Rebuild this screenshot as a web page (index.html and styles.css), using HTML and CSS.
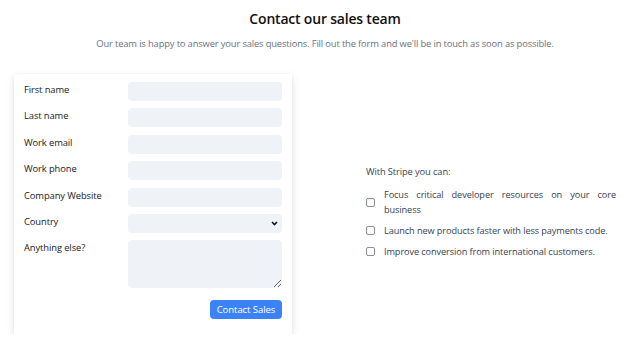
FILE: index.html
```html
<!DOCTYPE html>
<html>
<head>
<meta charset="utf-8">
<link rel="stylesheet" href="styles.css">
</head>
<body>
<header class="head">
  <h1 class="title">Contact our sales team</h1>
  <p class="sub">Our team is happy to answer your sales questions. Fill out the form and we'll be in touch as soon as possible.</p>
</header>
<main class="main">
  <form class="card">
    <div class="row"><label class="lbl">First name</label><input class="field" type="text"></div>
    <div class="row"><label class="lbl">Last name</label><input class="field" type="text"></div>
    <div class="row"><label class="lbl">Work email</label><input class="field" type="email"></div>
    <div class="row"><label class="lbl">Work phone</label><input class="field" type="tel"></div>
    <div class="row"><label class="lbl">Company Website</label><input class="field" type="text"></div>
    <div class="row"><label class="lbl">Country</label>
      <div class="selwrap"><select class="field sel"><option></option></select>
        <svg class="chev" width="7" height="5" viewBox="0 0 7 5"><path d="M1 1 L3.5 3.5 L6 1" fill="none" stroke="#111" stroke-width="1.6"/></svg>
      </div>
    </div>
    <div class="row"><label class="lbl">Anything else?</label><textarea class="field area"></textarea></div>
    <div class="actions"><button class="btn" type="button">Contact Sales</button></div>
  </form>
  <section class="side">
    <p class="lead">With Stripe you can:</p>
    <ul class="list">
      <li class="item"><input class="chk" type="checkbox"><span class="txt">Focus critical developer resources on your core business</span></li>
      <li class="item"><input class="chk" type="checkbox"><span class="txt">Launch new products faster with less payments code.</span></li>
      <li class="item"><input class="chk" type="checkbox"><span class="txt">Improve conversion from international customers.</span></li>
    </ul>
  </section>
</main>
</body>
</html>
```
FILE: styles.css
```css
html, body { margin: 0; padding: 0; background: #fff; }
body { font-family: "Open Sans", "Noto Sans", sans-serif; color: #1f2937; width: 640px; }
.head { text-align: center; padding: 9px 0 0 10px; }
.title { margin: 0; font-size: 14px; line-height: 20px; font-weight: 600; color: #111; letter-spacing: -0.2px; }
.sub { margin: 8px 0 0; font-size: 9.4px; line-height: 13px; color: #6b7280; letter-spacing: -0.15px; }
.main { display: flex; align-items: center; padding: 24px 0 0 14px; }
.card { width: 278px; box-sizing: border-box; padding: 8px 10px 15px; background: #fff; box-shadow: 0 3px 8px rgba(0,0,0,0.12), 0 0 2px rgba(0,0,0,0.04); display: flex; flex-direction: column; gap: 7.4px; }
.row { display: flex; align-items: flex-start; }
.lbl { width: 104px; font-size: 9.4px; line-height: 15px; color: #222; letter-spacing: -0.1px; }
.field { width: 154px; height: 19px; box-sizing: border-box; border: none; border-radius: 4px; background: #eff3f8; margin: 0; padding: 0 6px; font: inherit; outline: none; }
.selwrap { position: relative; width: 154px; height: 19px; }
.sel { appearance: none; -webkit-appearance: none; display: block; }
.chev { position: absolute; right: 4px; top: 7px; }
.area { height: 48px; resize: vertical; }
.actions { display: flex; justify-content: flex-end; padding-top: 4px; }
.btn { background: #3b82f6; color: #fff; border: none; border-radius: 4px; height: 19px; width: 72px; padding: 0; font: inherit; font-size: 9.6px; letter-spacing: -0.1px; }
.side { width: 250px; margin-left: 74px; padding-top: 16px; }
.lead { margin: 0 0 8px; font-size: 9.3px; line-height: 15px; color: #374151; letter-spacing: -0.1px; }
.list { list-style: none; margin: 0; padding: 0; display: flex; flex-direction: column; gap: 6px; }
.item { display: flex; align-items: center; }
.chk { margin: 0 9px 0 0; width: 9px; height: 9px; flex: none; appearance: none; -webkit-appearance: none; border: 1px solid #8a8f98; border-radius: 2px; box-sizing: border-box; background: #fff; }
.txt { font-size: 9.2px; line-height: 15px; color: #374151; text-align: justify; letter-spacing: -0.1px; }
```
